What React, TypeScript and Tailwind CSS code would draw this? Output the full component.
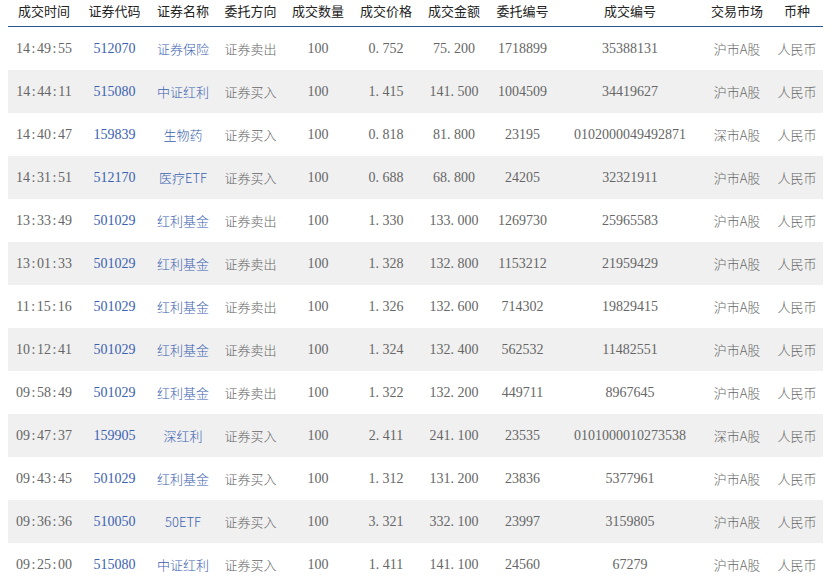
import React from "react";

type Row = [string, string, string, string, string, string, string, string, string, string, string];

const rows: Row[] = [
  ["14:49:55", "512070", "证券保险", "证券卖出", "100", "0.752", "75.200", "1718899", "35388131", "沪市A股", "人民币"],
  ["14:44:11", "515080", "中证红利", "证券买入", "100", "1.415", "141.500", "1004509", "34419627", "沪市A股", "人民币"],
  ["14:40:47", "159839", "生物药", "证券买入", "100", "0.818", "81.800", "23195", "0102000049492871", "深市A股", "人民币"],
  ["14:31:51", "512170", "医疗ETF", "证券买入", "100", "0.688", "68.800", "24205", "32321911", "沪市A股", "人民币"],
  ["13:33:49", "501029", "红利基金", "证券卖出", "100", "1.330", "133.000", "1269730", "25965583", "沪市A股", "人民币"],
  ["13:01:33", "501029", "红利基金", "证券卖出", "100", "1.328", "132.800", "1153212", "21959429", "沪市A股", "人民币"],
  ["11:15:16", "501029", "红利基金", "证券卖出", "100", "1.326", "132.600", "714302", "19829415", "沪市A股", "人民币"],
  ["10:12:41", "501029", "红利基金", "证券卖出", "100", "1.324", "132.400", "562532", "11482551", "沪市A股", "人民币"],
  ["09:58:49", "501029", "红利基金", "证券卖出", "100", "1.322", "132.200", "449711", "8967645", "沪市A股", "人民币"],
  ["09:47:37", "159905", "深红利", "证券买入", "100", "2.411", "241.100", "23535", "0101000010273538", "深市A股", "人民币"],
  ["09:43:45", "501029", "红利基金", "证券买入", "100", "1.312", "131.200", "23836", "5377961", "沪市A股", "人民币"],
  ["09:36:36", "510050", "50ETF", "证券买入", "100", "3.321", "332.100", "23997", "3159805", "沪市A股", "人民币"],
  ["09:25:00", "515080", "中证红利", "证券买入", "100", "1.411", "141.100", "24560", "67279", "沪市A股", "人民币"],
];

const headers = ["成交时间", "证券代码", "证券名称", "委托方向", "成交数量", "成交价格", "成交金额", "委托编号", "成交编号", "交易市场", "币种"];

const grid = "grid grid-cols-[72px_69px_68px_67px_68px_68px_68px_69px_146px_68px_52px]";
const num = "text-[14px] font-['Liberation_Serif','Noto_Sans_CJK_SC',serif]";
const cjk = "text-[13px] font-light font-['Noto_Sans_CJK_SC','Liberation_Serif',sans-serif]";
const numCols = new Set([0, 1, 4, 5, 6, 7, 8]);

function Mono({ text }: { text: string }) {
  const parts: React.ReactNode[] = [];
  let buf = "";
  text.split("").forEach((ch, k) => {
    if (ch === ":" || ch === ".") {
      if (buf) parts.push(buf);
      buf = "";
      parts.push(
        <span key={k} className={`inline-block w-[7px] ${ch === "." ? "text-left" : "text-center"}`}>
          {ch}
        </span>
      );
    } else {
      buf += ch;
    }
  });
  if (buf) parts.push(buf);
  return <>{parts}</>;
}

export default function App() {
  return (
    <div className="w-[833px] h-[585px] overflow-hidden bg-white">
      <div className="ml-2 w-[815px]">
        <div className={`${grid} h-[27px] border-b border-[#2b5592] items-center`}>
          {headers.map((h) => (
            <div key={h} className="text-center text-[13px] text-[#222] font-['Noto_Sans_CJK_SC',sans-serif] leading-none pb-[6px]">
              {h}
            </div>
          ))}
        </div>
        {rows.map((r, i) => (
          <div key={i} className={`${grid} h-[43px] items-center ${i % 2 === 1 ? "bg-[#f0f0f0]" : "bg-white"}`}>
            {r.map((c, j) => (
              <div
                key={j}
                className={`text-center leading-none whitespace-nowrap ${numCols.has(j) ? num : cjk} ${
                  j === 1 || j === 2 ? "text-[#3a62b0]" : "text-[#666]"
                }`}
              >
                {j === 0 || j === 5 || j === 6 ? <Mono text={c} /> : c}
              </div>
            ))}
          </div>
        ))}
      </div>
    </div>
  );
}
